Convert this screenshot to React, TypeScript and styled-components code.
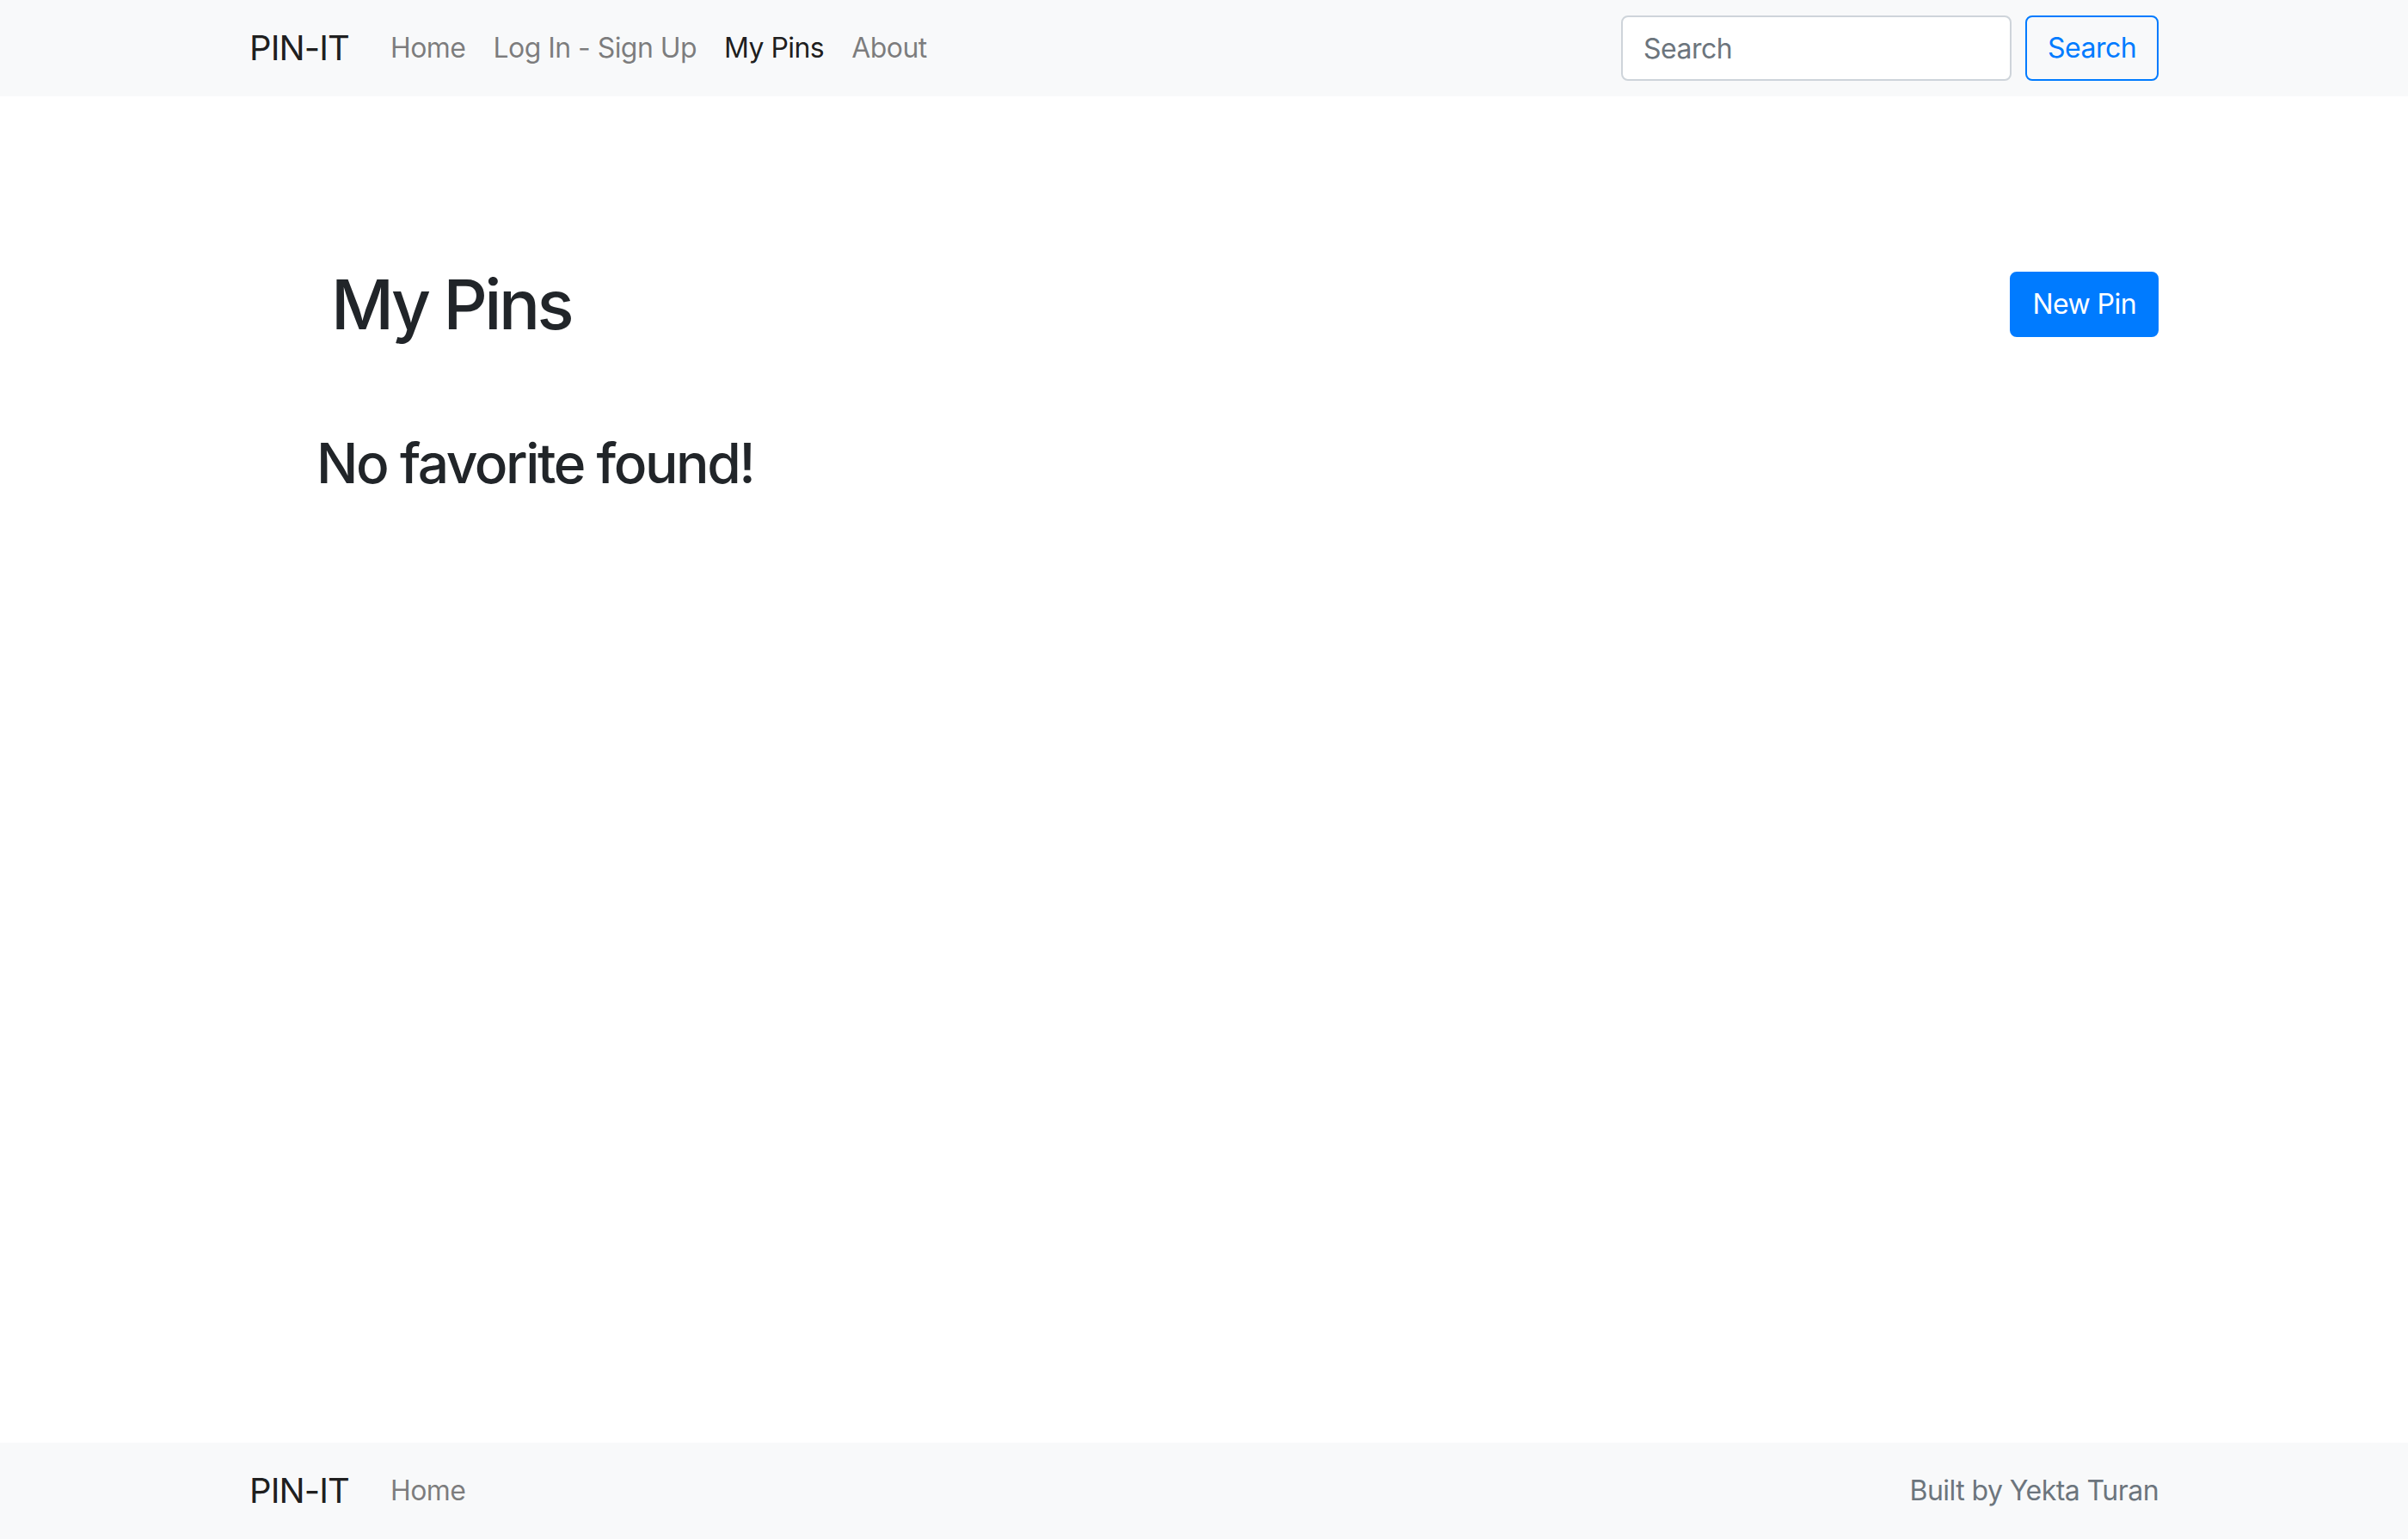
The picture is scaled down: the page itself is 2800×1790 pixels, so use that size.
import React from "react";
import styled, { createGlobalStyle } from "styled-components";

const Global = createGlobalStyle`
  html, body { margin: 0; padding: 0; }
  body {
    font-family: Inter, "Noto Sans", "Liberation Sans", sans-serif;
    font-size: 32px;
    line-height: 1.5;
    letter-spacing: -0.55px;
    color: #212529;
    background: #fff;
  }
  #root { min-height: 1790px; display: flex; flex-direction: column; }
`;

const Page = styled.div`
  display: flex;
  flex-direction: column;
  min-height: 1790px;
`;

const Bar = styled.nav`
  background: #f8f9fa;
  height: 112px;
  flex-shrink: 0;
`;

const BarInner = styled.div`
  box-sizing: border-box;
  width: 2280px;
  margin: 0 auto;
  padding: 0 30px;
  height: 100%;
  display: flex;
  align-items: center;
`;

const Brand = styled.a`
  font-size: 40px;
  line-height: 1.5;
  letter-spacing: -0.9px;
  color: rgba(0, 0, 0, 0.9);
  text-decoration: none;
  margin-right: 32px;
  white-space: nowrap;
`;

const NavList = styled.div`
  display: flex;
  align-items: center;
`;

const NavLink = styled.a<{ $active?: boolean }>`
  padding: 16px;
  font-size: 32px;
  line-height: 1.5;
  color: ${(p) => (p.$active ? "rgba(0,0,0,0.9)" : "rgba(0,0,0,0.5)")};
  text-decoration: none;
  white-space: nowrap;
`;

const Spacer = styled.div`
  flex: 1;
`;

const SearchForm = styled.form`
  display: flex;
  align-items: center;
  gap: 16px;
  margin: 0;
`;

const SearchInput = styled.input`
  box-sizing: border-box;
  width: 454px;
  height: 76px;
  padding: 12px 24px;
  font-family: inherit;
  font-size: 32px;
  line-height: 1.5;
  letter-spacing: inherit;
  color: #495057;
  background: #fff;
  border: 2px solid #ced4da;
  border-radius: 8px;
  outline: none;
  &::placeholder { color: #6c757d; }
`;

const Button = styled.button<{ $variant: "outline" | "solid" }>`
  box-sizing: border-box;
  height: 76px;
  padding: 12px 24px;
  font-family: inherit;
  font-size: 32px;
  line-height: 1.5;
  letter-spacing: inherit;
  border-radius: 8px;
  border: 2px solid #007bff;
  background: ${(p) => (p.$variant === "solid" ? "#007bff" : "transparent")};
  color: ${(p) => (p.$variant === "solid" ? "#fff" : "#007bff")};
  cursor: pointer;
  white-space: nowrap;
`;

const Main = styled.main`
  flex: 1;
  box-sizing: border-box;
  width: 2280px;
  margin: 0 auto;
  padding: 194px 30px 0;
`;

const HeaderRow = styled.div`
  display: flex;
  align-items: center;
  justify-content: space-between;
`;

const Title = styled.h1`
  margin: 0 0 0 95px;
  font-size: 80px;
  font-weight: 500;
  line-height: 1.2;
  letter-spacing: -3.5px;
`;

const Empty = styled.h2`
  margin: 99px 0 0 78px;
  font-size: 64px;
  font-weight: 500;
  line-height: 1.2;
  letter-spacing: -2.4px;
`;

const Credit = styled.span`
  color: #6c757d;
  font-size: 32px;
  line-height: 1.5;
  white-space: nowrap;
`;

export default function App() {
  return (
    <Page>
      <Global />
      <Bar>
        <BarInner>
          <Brand href="#">PIN-IT</Brand>
          <NavList>
            <NavLink href="#">Home</NavLink>
            <NavLink href="#">Log In - Sign Up</NavLink>
            <NavLink href="#" $active>
              My Pins
            </NavLink>
            <NavLink href="#">About</NavLink>
          </NavList>
          <Spacer />
          <SearchForm onSubmit={(e) => e.preventDefault()}>
            <SearchInput type="search" placeholder="Search" />
            <Button type="submit" $variant="outline">
              Search
            </Button>
          </SearchForm>
        </BarInner>
      </Bar>
      <Main>
        <HeaderRow>
          <Title>My Pins</Title>
          <Button type="button" $variant="solid">
            New Pin
          </Button>
        </HeaderRow>
        <Empty>No favorite found!</Empty>
      </Main>
      <Bar as="footer">
        <BarInner>
          <Brand href="#">PIN-IT</Brand>
          <NavList>
            <NavLink href="#">Home</NavLink>
          </NavList>
          <Spacer />
          <Credit>Built by Yekta Turan</Credit>
        </BarInner>
      </Bar>
    </Page>
  );
}
